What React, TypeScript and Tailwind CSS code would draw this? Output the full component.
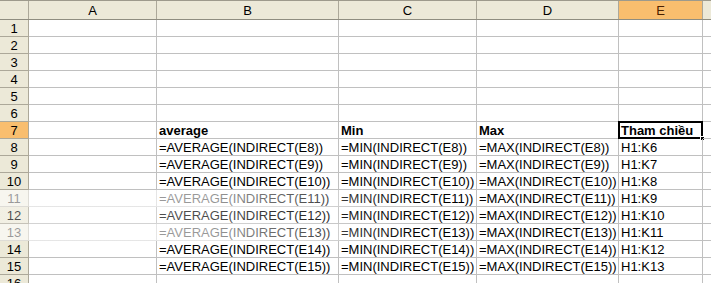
import React from "react";

const cols = ["A", "B", "C", "D", "E", ""];
const widths = ["w-[128px]", "w-[182px]", "w-[138px]", "w-[142px]", "w-[84px]", "w-[20px]"];

type Row = string[];
const rows: Row[] = [];
for (let i = 1; i <= 16; i++) rows.push(["", "", "", "", "", ""]);
rows[6] = ["", "average", "Min", "Max", "Tham chiều", ""];
for (let r = 8; r <= 15; r++) {
  rows[r - 1] = [
    "",
    `=AVERAGE(INDIRECT(E${r}))`,
    `=MIN(INDIRECT(E${r}))`,
    `=MAX(INDIRECT(E${r}))`,
    `H1:K${r - 2}`,
    "",
  ];
}

export default function App() {
  return (
    <div
      className="relative w-[711px] h-[283px] overflow-hidden bg-white text-[13px] leading-none text-black"
      style={{ fontFamily: '"Liberation Sans", Arial, sans-serif' }}
    >
      {/* header row */}
      <div className="flex h-[20px] bg-[#ECE9D8] border-t border-[#9d9a8c] border-b border-b-[#8f8d80]">
        <div className="w-[29px] shrink-0 border-r border-[#ACA899]" />
        {cols.map((c, i) => (
          <div
            key={i}
            className={`${widths[i]} shrink-0 border-r border-[#ACA899] flex items-center justify-center ${
              c === "E" ? "bg-[#F9BE6E] text-[#4a2000]" : ""
            }`}
          >
            {c}
          </div>
        ))}
      </div>
      {rows.map((row, ri) => (
        <div key={ri} className="flex h-[17px]">
          <div
            className={`w-[29px] shrink-0 border-r border-b border-[#ACA899] flex items-end justify-center pb-[1px] ${
              ri === 6 ? "bg-[#F9BE6E]" : "bg-[#ECE9D8]"
            }`}
          >
            {ri + 1}
          </div>
          {row.map((v, ci) => {
            const selected = ri === 6 && ci === 4;
            return (
              <div
                key={ci}
                className={`${widths[ci]} shrink-0 border-r border-b border-[#C0C0C0] relative flex items-end pl-[2px] pb-[1px] whitespace-nowrap ${
                  ri === 6 ? "font-bold" : ""
                }`}
              >
                {v}
                {selected && (
                  <>
                    <div className="absolute left-[-1px] top-[-1px] right-[-1px] bottom-[-1px] border-2 border-black" />
                    <div className="absolute right-[-3px] bottom-[-3px] w-[5px] h-[5px] bg-black border border-white" />
                  </>
                )}
              </div>
            );
          })}
        </div>
      ))}
      {/* watermark fade */}
      <div className="absolute left-0 top-[190px] w-[420px] h-[17px] bg-gradient-to-r from-white/60 via-white/60 to-transparent" />
      <div className="absolute left-0 top-[207px] w-[420px] h-[17px] bg-gradient-to-r from-white/30 via-white/30 to-transparent" />
      <div className="absolute left-0 top-[224px] w-[420px] h-[17px] bg-gradient-to-r from-white/60 via-white/60 to-transparent" />
    </div>
  );
}
